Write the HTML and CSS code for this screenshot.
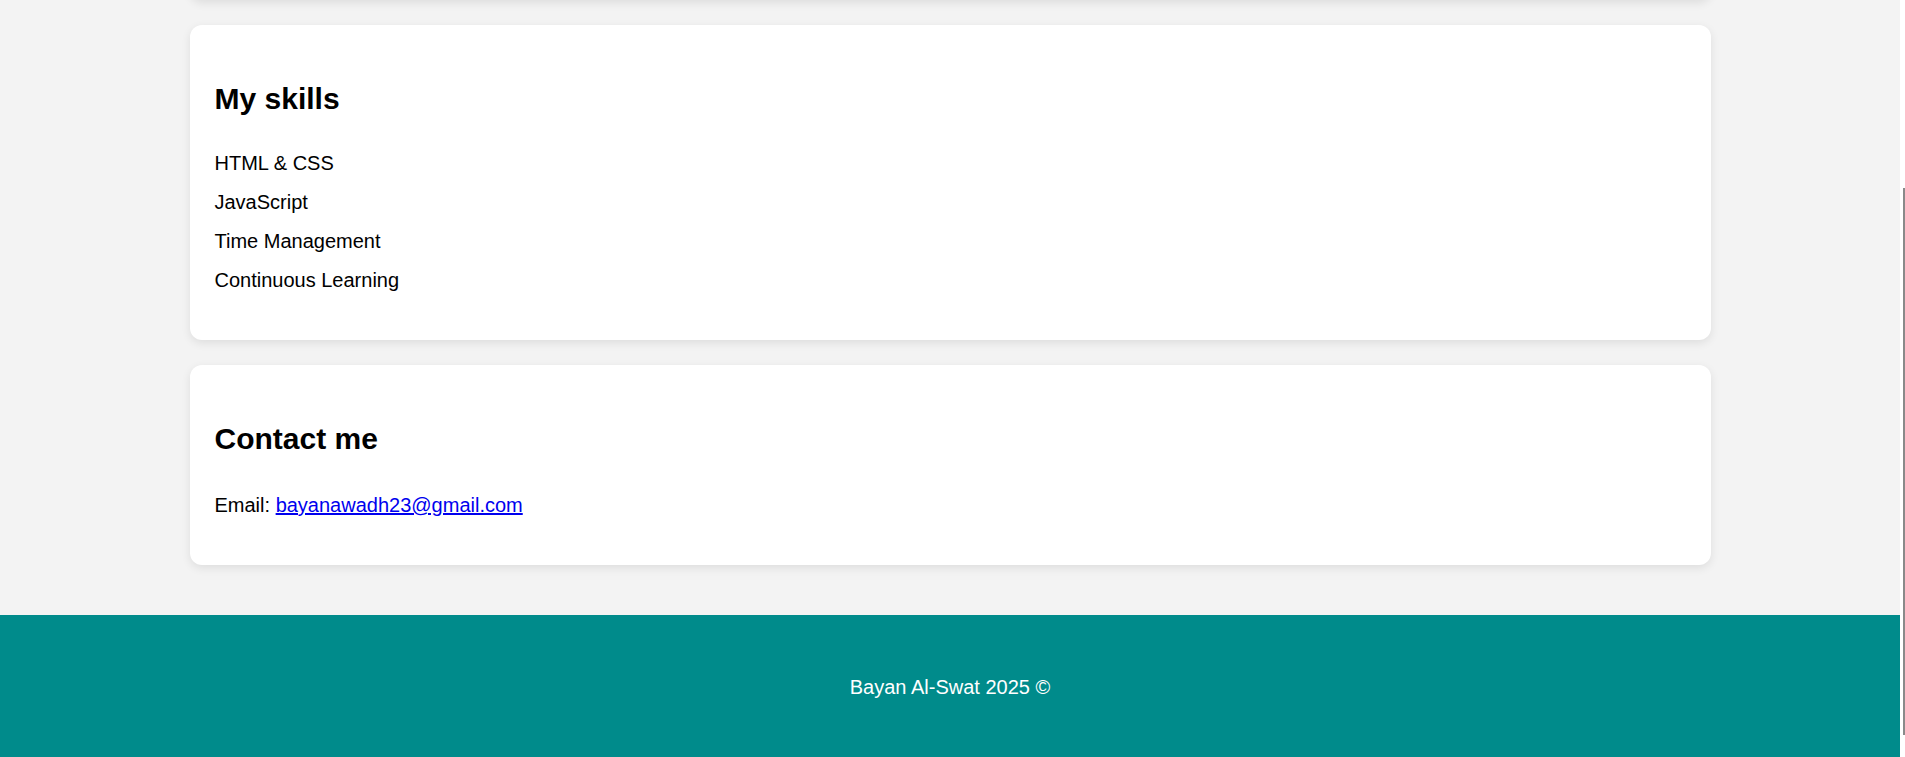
FILE: index.html
```html
<!DOCTYPE html>
<html lang="en">
<head>
<meta charset="utf-8">
<title>Bayan Al-Swat</title>
<link rel="stylesheet" href="styles.css">
</head>
<body>
<div class="page">
  <main class="main">
    <section class="card card-prev"></section>
    <section class="card">
      <h2 class="card-title">My skills</h2>
      <ul class="skills">
        <li>HTML &amp; CSS</li>
        <li>JavaScript</li>
        <li>Time Management</li>
        <li>Continuous Learning</li>
      </ul>
    </section>
    <section class="card">
      <h2 class="card-title">Contact me</h2>
      <p class="contact">Email: <a href="mailto:bayanawadh23@gmail.com">bayanawadh23@gmail.com</a></p>
    </section>
  </main>
  <footer class="footer">
    <p class="footer-text">Bayan Al-Swat 2025 ©</p>
  </footer>
</div>
<div class="scrollbar"><div class="thumb"></div></div>
</body>
</html>
```

FILE: styles.css
```css
html, body {
  margin: 0;
  padding: 0;
}
body {
  display: flex;
  height: 757px;
  overflow: hidden;
  background: #f3f3f3;
  font-family: "Liberation Sans", Arial, sans-serif;
  font-size: 20px;
  color: #000;
}
.page {
  flex: 1;
  display: flex;
  flex-direction: column;
  min-width: 0;
}
.main {
  padding: 0 0 25px;
}
.card {
  width: 1521px;
  margin: 0 auto 25px;
  background: #fff;
  border-radius: 12px;
  box-shadow: 0 3px 10px rgba(0, 0, 0, 0.09);
  padding: 25px;
  box-sizing: border-box;
}
.card-prev {
  height: 100px;
  margin-top: -100px;
}
.card-title {
  font-size: 30px;
  font-weight: bold;
  line-height: 34px;
  margin: 32px 0 28px;
}
.skills {
  list-style: none;
  margin: 28px 0 15px;
  padding: 0;
}
.skills li {
  line-height: 23px;
  padding: 8px 0;
}
.contact {
  margin: 38px 0 23px;
  line-height: 23px;
}
.contact a {
  color: #0000ee;
  text-decoration: underline;
}
.footer {
  background: #008b8b;
  color: #fff;
  text-align: center;
  padding: 61px 0 58px;
}
.footer-text {
  margin: 0;
  line-height: 23px;
}
.scrollbar {
  width: 5px;
  background: #fff;
  display: flex;
  justify-content: flex-end;
}
.thumb {
  margin-top: 188px;
  height: 547px;
  width: 2px;
  background: #8a8a8a;
}
```
